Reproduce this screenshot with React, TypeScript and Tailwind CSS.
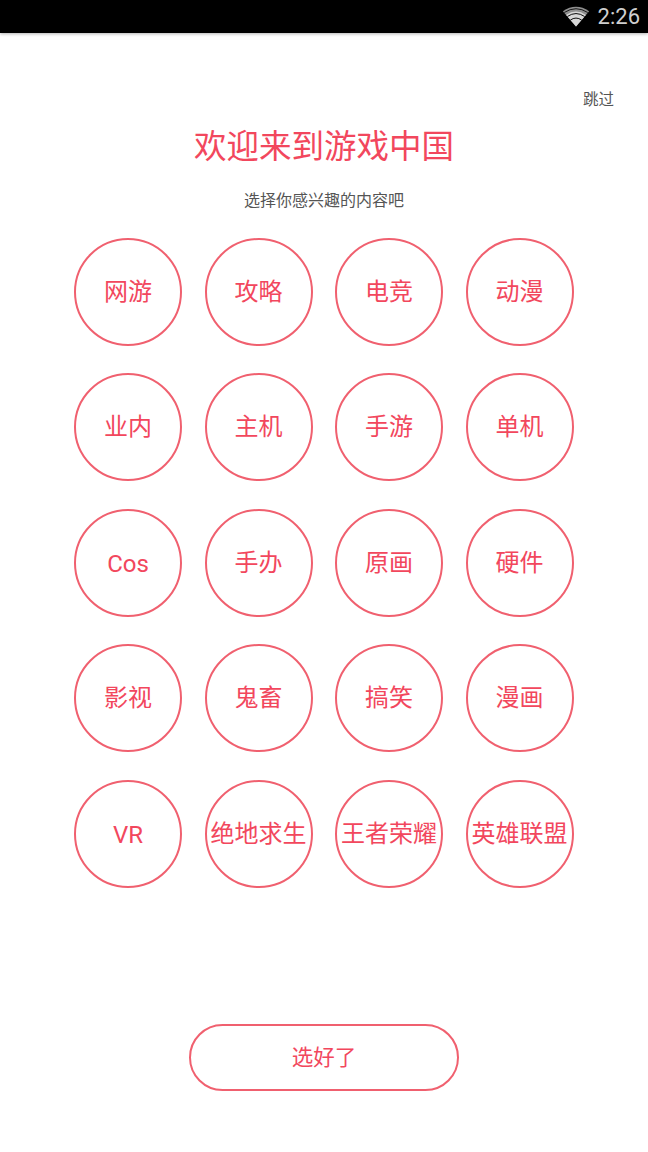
const rows = [
  ["网游", "攻略", "电竞", "动漫"],
  ["业内", "主机", "手游", "单机"],
  ["Cos", "手办", "原画", "硬件"],
  ["影视", "鬼畜", "搞笑", "漫画"],
  ["VR", "绝地求生", "王者荣耀", "英雄联盟"],
];

const font = "font-['Roboto','Noto_Sans_CJK_SC',sans-serif]";

export default function App() {
  return (
    <div className={`w-[648px] h-[1152px] bg-white flex flex-col overflow-hidden ${font}`}>
      <div className="h-[33px] bg-black flex items-center justify-end pr-[8px] gap-[8px] shadow-[0_1px_3px_rgba(0,0,0,0.3)] shrink-0">
        <svg width="28" height="21" viewBox="0 0 26 20">
          <path d="M13 19.5 L0.5 5 Q13 -3.5 25.5 5 Z" fill="#8f8f8f" />
          <path d="M13 19.5 L3.6 8.6 Q13 2 22.4 8.6 Z" fill="#d8d8d8" />
          <path d="M1.8 6.2 Q13 -1 24.2 6.2" fill="none" stroke="#000" strokeWidth="0.8" />
          <path d="M4.8 10 Q13 4.4 21.2 10" fill="none" stroke="#000" strokeWidth="0.9" />
          <path d="M7.6 13.4 Q13 9.6 18.4 13.4" fill="none" stroke="#000" strokeWidth="0.9" />
        </svg>
        <span className="text-[22px] leading-none text-[#cfcfcf] font-['Roboto',sans-serif]">2:26</span>
      </div>

      <div className="flex justify-end pt-[56px] pr-[34px]">
        <span className="text-[15.5px] leading-[22px] text-[#555555]">跳过</span>
      </div>

      <h1 className="mt-[13px] text-center text-[32.5px] leading-[46px] font-normal text-[#f2475d]">
        欢迎来到游戏中国
      </h1>

      <p className="mt-[19px] text-center text-[16px] leading-[24px] text-[#555555]">选择你感兴趣的内容吧</p>

      <div className="mt-[25px] ml-[74px] grid grid-cols-[repeat(4,108px)] gap-x-[22.5px] gap-y-[27.4px] w-fit">
        {rows.flat().map((label) => (
          <div
            key={label}
            className={`w-[108px] h-[108px] rounded-full border-2 border-[#f0606f] flex items-center justify-center text-[24px] leading-none whitespace-nowrap text-[#f2475d] ${
              label === "Cos" || label === "VR" ? "pt-[2px]" : ""
            }`}
          >
            {label}
          </div>
        ))}
      </div>

      <div className="mt-[136px] flex justify-center">
        <button className="w-[270px] h-[67px] pt-[2px] rounded-full border-2 border-[#f0606f] bg-white text-[21.5px] leading-none text-[#f2475d]">
          选好了
        </button>
      </div>
    </div>
  );
}
